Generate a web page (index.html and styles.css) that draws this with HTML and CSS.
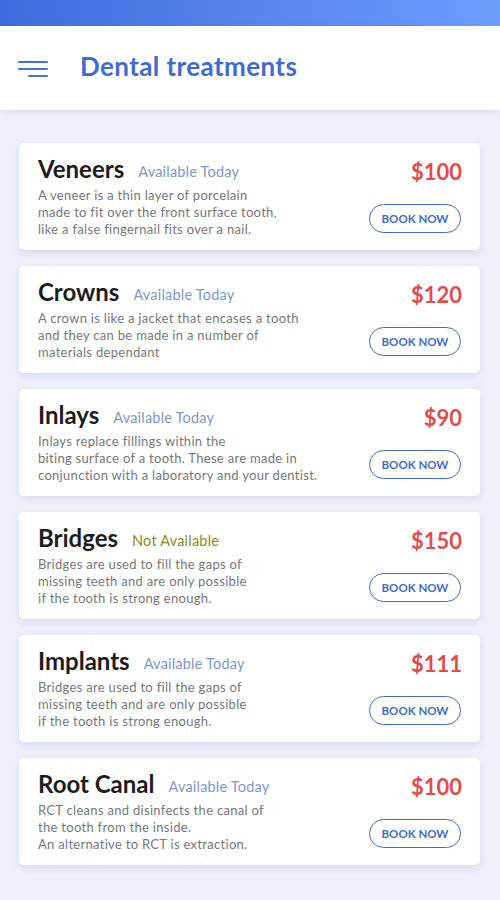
FILE: index.html
```html
<!DOCTYPE html>
<html>
<head>
<meta charset="utf-8">
<link rel="stylesheet" href="styles.css">
</head>
<body>
<div class="topbar"></div>
<header class="header">
  <div class="burger"><span class="l1"></span><span class="l2"></span><span class="l3"></span></div>
  <h1 class="title">Dental treatments</h1>
</header>
<main class="list">
  <div class="card">
    <div class="info">
      <div class="head"><span class="name">Veneers</span><span class="status">Available Today</span></div>
      <p class="desc">A veneer is a thin layer of porcelain<br>made to fit over the front surface tooth,<br>like a false fingernail fits over a nail.</p>
    </div>
    <div class="side"><span class="price">$100</span><button class="book">BOOK NOW</button></div>
  </div>
  <div class="card">
    <div class="info">
      <div class="head"><span class="name">Crowns</span><span class="status">Available Today</span></div>
      <p class="desc">A crown is like a jacket that encases a tooth<br>and they can be made in a number of<br>materials dependant</p>
    </div>
    <div class="side"><span class="price">$120</span><button class="book">BOOK NOW</button></div>
  </div>
  <div class="card">
    <div class="info">
      <div class="head"><span class="name">Inlays</span><span class="status">Available Today</span></div>
      <p class="desc">Inlays replace fillings within the<br>biting surface of a tooth. These are made in<br>conjunction with a laboratory and your dentist.</p>
    </div>
    <div class="side"><span class="price">$90</span><button class="book">BOOK NOW</button></div>
  </div>
  <div class="card">
    <div class="info">
      <div class="head"><span class="name">Bridges</span><span class="status na">Not Available</span></div>
      <p class="desc">Bridges are used to fill the gaps of<br>missing teeth and are only possible<br>if the tooth is strong enough.</p>
    </div>
    <div class="side"><span class="price">$150</span><button class="book">BOOK NOW</button></div>
  </div>
  <div class="card">
    <div class="info">
      <div class="head"><span class="name">Implants</span><span class="status">Available Today</span></div>
      <p class="desc">Bridges are used to fill the gaps of<br>missing teeth and are only possible<br>if the tooth is strong enough.</p>
    </div>
    <div class="side"><span class="price">$111</span><button class="book">BOOK NOW</button></div>
  </div>
  <div class="card">
    <div class="info">
      <div class="head"><span class="name">Root Canal</span><span class="status">Available Today</span></div>
      <p class="desc">RCT cleans and disinfects the canal of<br>the tooth from the inside.<br>An alternative to RCT is extraction.</p>
    </div>
    <div class="side"><span class="price">$100</span><button class="book">BOOK NOW</button></div>
  </div>
</main>
</body>
</html>
```
FILE: styles.css
```css
* { box-sizing: border-box; }
html, body { margin: 0; padding: 0; }
body {
  background: #eef0f9;
  font-family: Lato, "Noto Sans", sans-serif;
  width: 500px;
  height: 900px;
  overflow: hidden;
}
.topbar {
  height: 26px;
  background: linear-gradient(90deg, #3e6cdc 0%, #5681ea 45%, #6d9cff 100%);
}
.header {
  height: 84px;
  background: #fff;
  display: flex;
  align-items: center;
  padding-left: 18px;
  box-shadow: 0 2px 8px rgba(120, 130, 190, 0.18);
  position: relative;
}
.burger {
  width: 30px;
  display: flex;
  flex-direction: column;
  align-items: flex-end;
  gap: 5px;
  margin-top: 2px;
}
.burger span {
  display: block;
  height: 2px;
  background: #4a72cf;
  border-radius: 1px;
}
.l1, .l2 { width: 30px; }
.l3 { width: 20px; }
.title {
  margin: 0 0 4px 32px;
  font-size: 26px;
  font-weight: 700;
  color: #3f6bcf;
  letter-spacing: 0.4px;
}
.list {
  padding: 33px 20px 0 19px;
  display: flex;
  flex-direction: column;
  gap: 16px;
}
.card {
  height: 107px;
  background: #fff;
  border-radius: 5px;
  box-shadow: 0 3px 8px rgba(110, 120, 200, 0.18);
  display: flex;
  justify-content: space-between;
  padding: 11px 19px 0 19px;
}
.head {
  display: flex;
  align-items: baseline;
}
.name {
  font-size: 24px;
  font-weight: 700;
  color: #1c1c1e;
}
.status {
  margin-left: 14px;
  font-size: 14.5px;
  color: #7e97cf;
  letter-spacing: 0.2px;
  position: relative;
  top: -1px;
}
.status.na { color: #8c8a1a; }
.desc {
  margin: 4px 0 0;
  font-size: 13px;
  line-height: 17px;
  color: #76777d;
  letter-spacing: 0.3px;
}
.side {
  display: flex;
  flex-direction: column;
  align-items: flex-end;
  padding-top: 3px;
}
.price {
  font-size: 22px;
  font-weight: 700;
  color: #e24c4c;
  line-height: 30px;
  margin-right: -1px;
}
.book {
  margin-top: 17px;
  width: 92px;
  height: 29px;
  border: 1px solid #3f6bcf;
  border-radius: 15px;
  background: #fff;
  color: #3f6bcf;
  font-family: inherit;
  font-size: 11.5px;
  font-weight: 700;
  padding: 0;
}
```
